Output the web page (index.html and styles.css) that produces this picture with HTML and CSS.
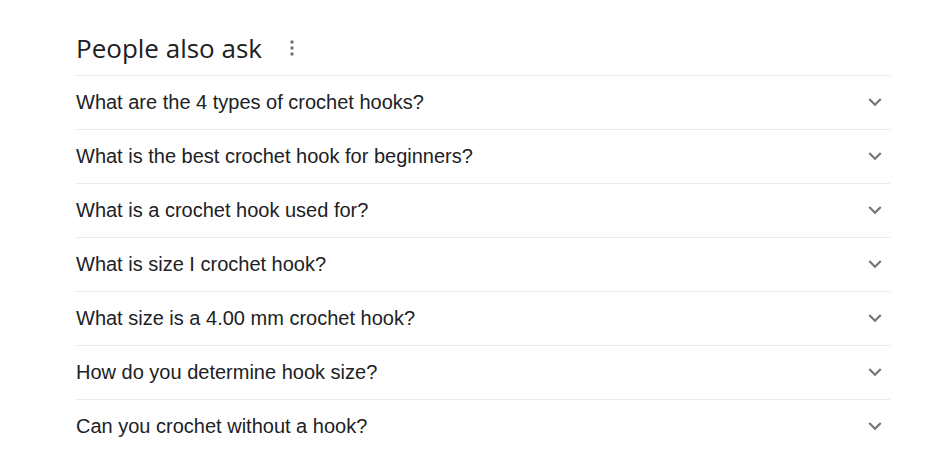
FILE: index.html
```html
<!DOCTYPE html>
<html>
<head>
  <meta charset="utf-8">
  <title>People also ask</title>
  <link rel="stylesheet" href="styles.css">
</head>
<body>
  <div class="container">
    <div class="header">
      <h2>People also ask</h2>
      <span class="more">
        <svg width="4" height="16" viewBox="0 0 4 16"><circle cx="2" cy="2" r="1.7"/><circle cx="2" cy="8" r="1.7"/><circle cx="2" cy="14" r="1.7"/></svg>
      </span>
    </div>

    <div class="questions">
      <div class="question"><span>What are the 4 types of crochet hooks?</span><svg class="chev" viewBox="0 0 24 24"><path d="M7.41 8.59L12 13.17l4.59-4.58L18 10l-6 6-6-6 1.41-1.41z"/></svg></div>
      <div class="question"><span>What is the best crochet hook for beginners?</span><svg class="chev" viewBox="0 0 24 24"><path d="M7.41 8.59L12 13.17l4.59-4.58L18 10l-6 6-6-6 1.41-1.41z"/></svg></div>
      <div class="question"><span>What is a crochet hook used for?</span><svg class="chev" viewBox="0 0 24 24"><path d="M7.41 8.59L12 13.17l4.59-4.58L18 10l-6 6-6-6 1.41-1.41z"/></svg></div>
      <div class="question"><span>What is size I crochet hook?</span><svg class="chev" viewBox="0 0 24 24"><path d="M7.41 8.59L12 13.17l4.59-4.58L18 10l-6 6-6-6 1.41-1.41z"/></svg></div>
      <div class="question"><span>What size is a 4.00 mm crochet hook?</span><svg class="chev" viewBox="0 0 24 24"><path d="M7.41 8.59L12 13.17l4.59-4.58L18 10l-6 6-6-6 1.41-1.41z"/></svg></div>
      <div class="question"><span>How do you determine hook size?</span><svg class="chev" viewBox="0 0 24 24"><path d="M7.41 8.59L12 13.17l4.59-4.58L18 10l-6 6-6-6 1.41-1.41z"/></svg></div>
      <div class="question"><span>Can you crochet without a hook?</span><svg class="chev" viewBox="0 0 24 24"><path d="M7.41 8.59L12 13.17l4.59-4.58L18 10l-6 6-6-6 1.41-1.41z"/></svg></div>
    </div>
  </div>
</body>
</html>
```

FILE: styles.css
```css
* {
  box-sizing: border-box;
}

body {
  margin: 0;
  background: #ffffff;
  color: #202124;
  font-family: 'Liberation Sans', Arial, sans-serif;
}

.container {
  width: 814px;
  margin-left: 76px;
}

.header {
  display: flex;
  align-items: center;
  height: 75px;
  padding-top: 20px;
}

h2 {
  margin: 0;
  font-family: 'Open Sans', sans-serif;
  font-size: 26px;
  font-weight: 400;
  color: #202124;
}

.more {
  display: flex;
  margin-left: 28px;
  fill: #70757a;
}

.question {
  display: flex;
  align-items: center;
  justify-content: space-between;
  height: 54px;
  padding-bottom: 2px;
  border-top: 1px solid #e8eaed;
  font-size: 20px;
  line-height: 24px;
}

.chev {
  width: 26px;
  height: 26px;
  margin-right: 2px;
  fill: #70757a;
}
```
